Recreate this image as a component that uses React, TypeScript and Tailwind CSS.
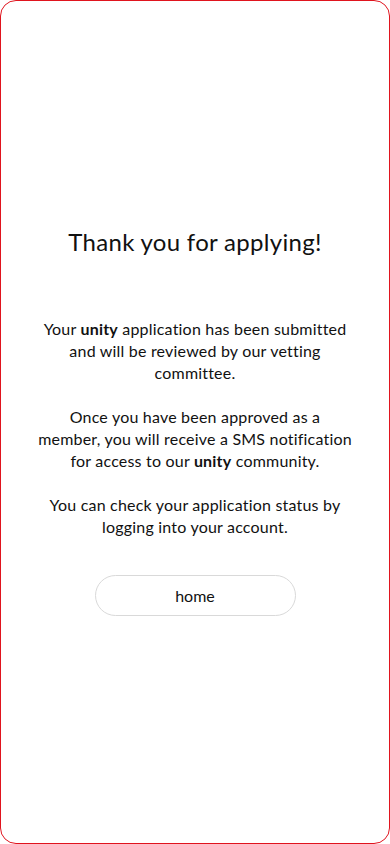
export default function App() {
  return (
    <div className="h-[844px] w-[390px] bg-white font-['Lato',sans-serif] text-[#111]">
      <div className="flex h-full flex-col items-center rounded-[16px] border border-[#e0141e] px-[20px] pt-[226px]">
        <h1 className="text-[24px] leading-[30px] tracking-[0.3px]">Thank you for applying!</h1>

        <div className="mt-[61px] flex flex-col gap-[22px] text-center text-[16px] leading-[22px] tracking-[0.2px]">
          <p>
            Your <b className="font-bold">unity</b> application has been submitted
            <br />
            and will be reviewed by our vetting
            <br />
            committee.
          </p>
          <p>
            Once you have been approved as a
            <br />
            member, you will receive a SMS notification
            <br />
            for access to our <b className="font-bold">unity</b> community.
          </p>
          <p>
            You can check your application status by
            <br />
            logging into your account.
          </p>
        </div>

        <button className="mt-[37px] h-[41px] w-[201px] rounded-full border border-[#d9d9d9] text-[16px]">
          home
        </button>
      </div>
    </div>
  );
}
